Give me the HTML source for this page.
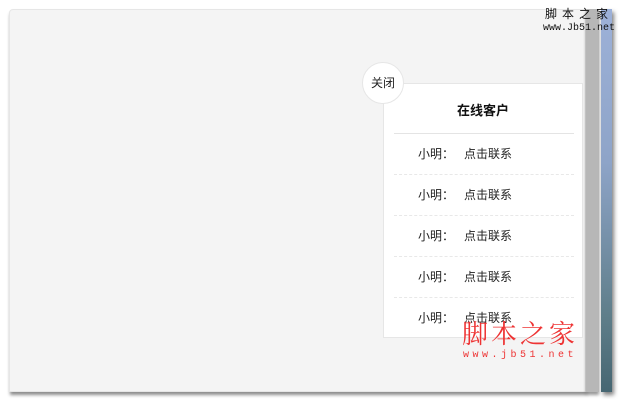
<!DOCTYPE html>
<html><head><meta charset="utf-8"><style>
html,body{margin:0;padding:0;width:622px;height:403px;overflow:hidden;background:#fff;font-family:"Liberation Sans","Noto Sans CJK SC",sans-serif;position:relative}
.win{position:absolute;left:9px;top:9px;width:577px;height:383px;background:#f4f4f4;border-radius:4px 0 0 0;box-shadow:1px 3px 3px rgba(0,0,0,.45);border:1px solid #e6e6e6;box-sizing:border-box}
.sb{position:absolute;left:586px;top:9px;width:13px;height:383px;background:#b7b7b7;box-shadow:0 3px 3px rgba(0,0,0,.4)}
.strip{position:absolute;left:601px;top:9px;width:11px;height:383px;background:linear-gradient(#9db1d8,#8ea4c8 40%,#5f7e8a 80%,#466672);box-shadow:2px 3px 4px rgba(0,0,0,.5)}
.panel{position:absolute;left:383px;top:83px;width:200px;height:255px;background:#fff;border:1px solid #e6e6e6;box-sizing:border-box}
.close{position:absolute;left:362px;top:62px;width:42px;height:42px;border-radius:50%;background:#fff;border:1px solid #e6e6e6;box-sizing:border-box;font-size:12px;line-height:40px;text-align:center;color:#222}
.title{position:absolute;left:0;width:100%;top:16px;text-align:center;font-size:13px;font-weight:bold;color:#111}
.hr{position:absolute;left:10px;width:180px;top:49px;border-top:1px solid #e4e4e4}
.row{position:absolute;left:10px;width:180px;height:41px;font-size:12px;color:#222;line-height:41px;box-sizing:border-box}
.row span{position:absolute;left:24px}
.row b{font-weight:normal;position:absolute;left:70px}
.row.d{border-bottom:1px dashed #e8e8e8}
.logo1{position:absolute;left:545px;top:5px;font-size:12px;letter-spacing:5px;color:#111}
.logo2{position:absolute;left:543px;top:23px;font-family:"Liberation Mono",monospace;font-size:10px;color:#111}
.wm1{position:absolute;left:462px;top:318px;font-size:26px;line-height:30px;color:#ee3333;letter-spacing:3px;font-family:"Noto Serif CJK SC",serif}
.wm2{position:absolute;left:463px;top:350px;font-size:10px;color:#ee3333;letter-spacing:3.5px;font-family:"Liberation Mono",monospace}
</style></head><body>
<div class="win"></div>
<div class="sb"></div>
<div class="strip"></div>
<div class="logo1">脚本之家</div>
<div class="logo2">www.Jb51.net</div>
<div class="panel">
<div class="title">在线客户</div>
<div class="hr"></div>
<div class="row d" style="top:50px"><span>小明：</span><b>点击联系</b></div>
<div class="row d" style="top:91px"><span>小明：</span><b>点击联系</b></div>
<div class="row d" style="top:132px"><span>小明：</span><b>点击联系</b></div>
<div class="row d" style="top:173px"><span>小明：</span><b>点击联系</b></div>
<div class="row" style="top:214px"><span>小明：</span><b>点击联系</b></div>
</div>
<div class="close">关闭</div>
<div class="wm1">脚本之家</div>
<div class="wm2">www.jb51.net</div>
</body></html>
